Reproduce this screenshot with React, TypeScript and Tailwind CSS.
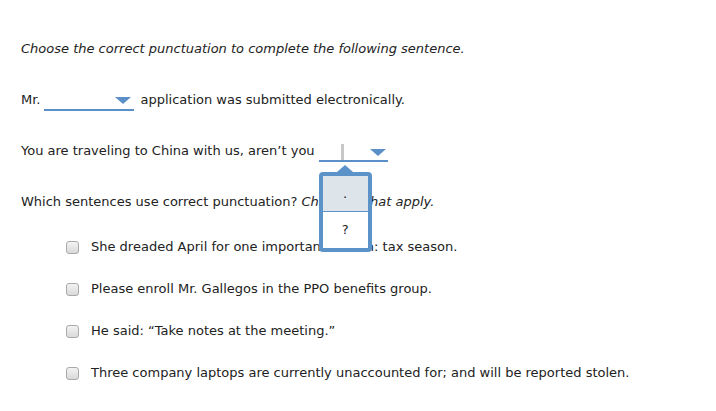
const font = { fontFamily: '"DejaVu Sans", Verdana, sans-serif' };

function Caret() {
  return (
    <svg width="16" height="7" viewBox="0 0 16 7" className="block">
      <path d="M0 0 H16 L8 7 Z" fill="#5b8fc7" />
    </svg>
  );
}

function Checkbox() {
  return (
    <span className="inline-block w-[13px] h-[13px] rounded-[3px] border border-[#a9a9a9] bg-gradient-to-b from-[#f3f3f3] to-[#d9d9d9] shrink-0" />
  );
}

const items = [
  "She dreaded April for one important reason: tax season.",
  "Please enroll Mr. Gallegos in the PPO benefits group.",
  "He said: \u201cTake notes at the meeting.\u201d",
  "Three company laptops are currently unaccounted for; and will be reported stolen.",
];

export default function App() {
  return (
    <div className="w-[716px] h-[411px] bg-white text-[#222] text-[13px] overflow-hidden" style={font}>
      <div className="pl-[21px] pt-[40px]">
        <p className="italic leading-[18px]">Choose the correct punctuation to complete the following sentence.</p>

        {/* Sentence 1 */}
        <div className="mt-[33px] flex items-end h-[18px]">
          <span>Mr.</span>
          <span className="ml-[3px] w-[90px] h-[18px] border-b-2 border-[#5b8fc7] flex items-start justify-end pr-[3px] pt-[4px] translate-y-[2px]">
            <Caret />
          </span>
          <span className="ml-[7px]">application was submitted electronically.</span>
        </div>

        {/* Sentence 2 */}
        <div className="mt-[33px] flex items-end h-[18px]">
          <span>You are traveling to China with us, aren&rsquo;t you</span>
          <span className="relative ml-[4px] w-[69px] h-[20px] border-b-2 border-[#5b8fc7] flex items-start translate-y-[2px]">
            <span className="ml-[22px] mt-[2px] w-[3px] h-[16px] bg-[#c8c8c8]" />
            <span className="ml-auto mr-[2px] mt-[7px]"><Caret /></span>

            {/* open menu */}
            <div className="absolute left-0 top-[23px] w-[53px] z-10">
              <div className="mx-auto w-0 h-0 border-x-[8px] border-x-transparent border-b-[7px] border-b-[#5b92c8]" />
              <div className="rounded-[4px] border-4 border-[#5b92c8] bg-white overflow-hidden">
                <div className="h-[36px] bg-[#dde5ea] border-b border-[#5b92c8] flex items-center justify-center leading-none">.</div>
                <div className="h-[36px] flex items-center justify-center">?</div>
              </div>
            </div>
          </span>
        </div>

        {/* Question */}
        <p className="mt-[33px] leading-[18px]">
          Which sentences use correct punctuation? <span className="italic">Check all that apply.</span>
        </p>

        <ul className="mt-[27px] pl-[45px] flex flex-col gap-[24px]">
          {items.map((t) => (
            <li key={t} className="flex items-center h-[18px]">
              <Checkbox />
              <span className="ml-[12px]">{t}</span>
            </li>
          ))}
        </ul>
      </div>
    </div>
  );
}
